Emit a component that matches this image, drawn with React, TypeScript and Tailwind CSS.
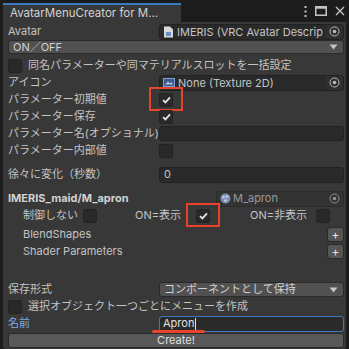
import type { ReactNode } from 'react';

const font = { fontFamily: 'Inter, "Noto Sans CJK JP", sans-serif' };

function Check({ on, mark }: { on?: boolean; mark?: boolean }) {
  return (
    <div className="relative h-[14px] w-[14px] shrink-0">
      <div className="flex h-full w-full items-center justify-center rounded-[2px] border border-[#232323] bg-[#292929]">
        {on && (
          <svg width="9" height="8" viewBox="0 0 9 8">
            <path d="M1 4.2 L3.4 6.4 L8 1.4" fill="none" stroke="#e4e4e4" strokeWidth="1.8" />
          </svg>
        )}
      </div>
      {mark && <div className="absolute -left-[10px] -top-[6px] h-[24px] w-[34px] border-2 border-[#e8432b]" />}
    </div>
  );
}

function Target() {
  return (
    <svg width="11" height="11" viewBox="0 0 11 11">
      <circle cx="5.5" cy="5.5" r="4.5" fill="none" stroke="#b9b9b9" strokeWidth="1" />
      <circle cx="5.5" cy="5.5" r="1.8" fill="#b9b9b9" />
    </svg>
  );
}

function Arrow() {
  return (
    <svg width="9" height="6" viewBox="0 0 9 6">
      <path d="M0.5 0.5 H8.5 L4.5 5.5 Z" fill="#c4c4c4" />
    </svg>
  );
}

function Row({ label, children, labelClass = '' }: { label: string; children?: ReactNode; labelClass?: string }) {
  return (
    <div className="flex h-[17px] items-center">
      <div className={`w-[151px] shrink-0 whitespace-nowrap ${labelClass}`}>{label}</div>
      <div className="flex min-w-0 flex-1 items-center">{children}</div>
    </div>
  );
}

function ObjField({ icon, text }: { icon: ReactNode; text: string }) {
  return (
    <div className="flex h-[16px] w-full items-center overflow-hidden rounded-[3px] border border-[#212121] bg-[#2a2a2a]">
      <div className="ml-[3px] mr-[3px] flex shrink-0">{icon}</div>
      <div className="min-w-0 flex-1 overflow-hidden whitespace-nowrap leading-[14px]">{text}</div>
      <div className="flex h-full w-[17px] shrink-0 items-center justify-center bg-[#2f2f2f]">
        <Target />
      </div>
    </div>
  );
}

function Plus() {
  return (
    <div className="flex h-[15px] w-[17px] items-center justify-center rounded-[3px] border border-[#2a2a2a] bg-[#565656] text-[12px] leading-none text-[#e0e0e0]">
      +
    </div>
  );
}

export default function App() {
  return (
    <div className="h-[349px] w-[349px] overflow-hidden bg-[#1c1c1c] text-[11px] text-[#c4c4c4]" style={font}>
      <div className="flex h-[22px] items-end">
        <div className="ml-[3px] flex h-[19px] w-[178px] items-center border-t-2 border-[#3a79bb] bg-[#383838] pl-[7px] text-[11.5px] text-[#d2d2d2]">
          AvatarMenuCreator for M...
        </div>
        <div className="flex h-full flex-1 items-center justify-end gap-[8px] pr-[4px]">
          <svg width="3" height="11" viewBox="0 0 3 11">
            <rect x="0.5" y="0" width="2" height="2" fill="#c4c4c4" />
            <rect x="0.5" y="4.5" width="2" height="2" fill="#c4c4c4" />
            <rect x="0.5" y="9" width="2" height="2" fill="#c4c4c4" />
          </svg>
          <svg width="12" height="10" viewBox="0 0 12 10">
            <rect x="0.75" y="0.75" width="10.5" height="8.5" fill="none" stroke="#c4c4c4" strokeWidth="1.5" />
            <rect x="0.75" y="0.75" width="10.5" height="2" fill="#c4c4c4" />
          </svg>
          <svg width="10" height="10" viewBox="0 0 10 10">
            <path d="M1 1 L9 9 M9 1 L1 9" stroke="#c4c4c4" strokeWidth="1.4" />
          </svg>
        </div>
      </div>
      <div className="mx-[3px] flex h-[327px] flex-col rounded-b-[3px] bg-[#383838] pl-[5px] pr-[2px] pt-[1px]">
        <Row label="Avatar">
          <ObjField
            text="IMERIS (VRC Avatar Descrip"
            icon={
              <svg width="11" height="12" viewBox="0 0 11 12">
                <path d="M1 0.5 H7 L10 3.5 V11.5 H1 Z" fill="#d9d9d9" />
                <rect x="3" y="6" width="5" height="4" fill="#6a8fc4" />
              </svg>
            }
          />
        </Row>
        <div className="flex h-[14px] items-center justify-between rounded-[3px] border border-[#2a2a2a] bg-[#515151] pl-[4px] pr-[5px] text-[#d2d2d2]">
          <span className="leading-none">ON／OFF</span>
          <Arrow />
        </div>
        <div className="mt-[3px] flex h-[17px] items-center gap-[6px]">
          <Check />
          <span className="whitespace-nowrap">同名パラメーターや同マテリアルスロットを一括設定</span>
        </div>
        <Row label="アイコン">
          <ObjField
            text="None (Texture 2D)"
            icon={
              <svg width="12" height="9" viewBox="0 0 12 9">
                <rect x="0.5" y="0.5" width="11" height="8" fill="#3d5a8a" stroke="#7f9fd1" />
                <path d="M2 6.5 L5 3.5 L7 5.5 L8.5 4 L10 6.5 Z" fill="#b5c7e6" />
              </svg>
            }
          />
        </Row>
        <Row label="パラメーター初期値">
          <Check on mark />
        </Row>
        <Row label="パラメーター保存">
          <Check on />
        </Row>
        <Row label="パラメーター名(オプショナル)">
          <div className="h-[15px] w-full rounded-[3px] border border-[#212121] bg-[#2a2a2a]" />
        </Row>
        <Row label="パラメーター内部値">
          <Check />
        </Row>
        <div className="mt-[7px]">
          <Row label="徐々に変化（秒数）">
            <div className="flex h-[16px] w-full items-center rounded-[3px] border border-[#212121] bg-[#2a2a2a] pl-[4px] leading-none">
              0
            </div>
          </Row>
        </div>
        <div className="mt-[7px] flex h-[17px] items-center">
          <div className="w-[208px] shrink-0 font-bold text-[#d2d2d2]">IMERIS_maid/M_apron</div>
          <div className="flex h-[16px] flex-1 items-center overflow-hidden rounded-[3px] border border-[#2c2c2c] bg-[#333333] text-[#9a9a9a]">
            <svg className="ml-[3px] mr-[2px]" width="11" height="11" viewBox="0 0 11 11">
              <circle cx="5.5" cy="5.5" r="5" fill="#7d8fb5" />
              <circle cx="3.5" cy="4" r="1.3" fill="#c9d3ea" />
              <circle cx="7" cy="3.5" r="1.3" fill="#c9d3ea" />
              <circle cx="5.5" cy="7.5" r="1.3" fill="#c9d3ea" />
            </svg>
            <span className="flex-1 leading-none">M_apron</span>
            <div className="flex w-[17px] justify-center opacity-70">
              <Target />
            </div>
          </div>
        </div>
        <div className="flex h-[17px] items-center pl-[15px]">
          <span className="w-[60px] shrink-0">制御しない</span>
          <Check />
          <span className="ml-[38px] w-[61px] shrink-0">ON=表示</span>
          <Check on mark />
          <span className="ml-[40px] w-[66px] shrink-0">ON=非表示</span>
          <Check />
        </div>
        <div className="mt-[2px] flex h-[17px] items-center justify-between pl-[15px]">
          <span>BlendShapes</span>
          <Plus />
        </div>
        <div className="flex h-[17px] items-center justify-between pl-[15px]">
          <span>Shader Parameters</span>
          <Plus />
        </div>
        <div className="mt-[21px]">
          <Row label="保存形式">
            <div className="flex h-[15px] w-full items-center justify-between rounded-[3px] border border-[#2a2a2a] bg-[#515151] pl-[4px] pr-[5px] text-[#d2d2d2]">
              <span className="whitespace-nowrap leading-none">コンポーネントとして保持</span>
              <Arrow />
            </div>
          </Row>
        </div>
        <div className="flex h-[17px] items-center gap-[6px]">
          <Check />
          <span className="whitespace-nowrap">選択オブジェクト一つごとにメニューを作成</span>
        </div>
        <Row label="名前" labelClass="text-[#7fa8e6]">
          <div className="relative flex h-[16px] w-full items-center rounded-[3px] border border-[#3a79bb] bg-[#2a2a2a] pl-[3px] leading-none text-[#e0e0e0]">
            Apron<span className="ml-[1px] h-[12px] w-px bg-[#e0e0e0]" />
            <div className="absolute -left-[8px] top-[13px] h-[3px] w-[53px] rounded-full bg-[#e8432b]" />
          </div>
        </Row>
        <div className="mt-[1px] flex h-[15px] items-center justify-center rounded-[3px] border border-[#2a2a2a] bg-[#585858] leading-none text-[#e0e0e0]">
          Create!
        </div>
      </div>
    </div>
  );
}
